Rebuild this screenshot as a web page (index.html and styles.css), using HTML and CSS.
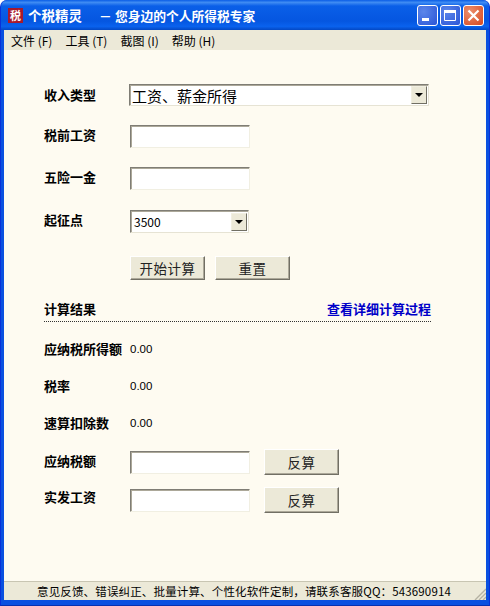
FILE: index.html
```html
<html>
<head>
    <title>个税精灵</title>
    <link rel="stylesheet" href="styles.css">
</head>

<body>
    <div class="window">
        <div class="titlebar">
            <span class="app-icon">税</span>
            <span class="title">个税精灵</span>
            <span class="subtitle"><span class="dash">－</span>您身边的个人所得税专家</span>
            <div class="win-buttons">
                <div class="win-btn">
                    <svg width="19" height="19" viewBox="0 0 19 19"><rect x="4" y="12" width="7" height="3" fill="#fff"/></svg>
                </div>
                <div class="win-btn">
                    <svg width="19" height="19" viewBox="0 0 19 19"><path d="M3.5 4.5h11v10h-11z" fill="none" stroke="#fff"/><rect x="3" y="4" width="12" height="3" fill="#fff"/></svg>
                </div>
                <div class="win-btn close">
                    <svg width="19" height="19" viewBox="0 0 19 19"><path d="M4.5 4.5l10 10M14.5 4.5l-10 10" stroke="#fff" stroke-width="2.2"/></svg>
                </div>
            </div>
        </div>

        <div class="menubar">
            <span>文件 (F)</span>
            <span>工具 (T)</span>
            <span>截图 (I)</span>
            <span>帮助 (H)</span>
        </div>

        <div class="content">
            <div class="row row-type">
                <label>收入类型</label>
                <div class="select select-wide">
                    <span class="select-text big">工资、薪金所得</span>
                    <span class="arrow"></span>
                </div>
            </div>
            <div class="row row-salary">
                <label>税前工资</label>
                <div class="input"></div>
            </div>
            <div class="row row-fund">
                <label>五险一金</label>
                <div class="input"></div>
            </div>
            <div class="row row-base">
                <label>起征点</label>
                <div class="select">
                    <span class="select-text">3500</span>
                    <span class="arrow"></span>
                </div>
            </div>
            <div class="actions">
                <button>开始计算</button>
                <button>重置</button>
            </div>

            <div class="result-head">
                <label>计算结果</label>
                <a href="#">查看详细计算过程</a>
            </div>

            <div class="result-row first">
                <label>应纳税所得额</label>
                <span>0.00</span>
            </div>
            <div class="result-row">
                <label>税率</label>
                <span>0.00</span>
            </div>
            <div class="result-row">
                <label>速算扣除数</label>
                <span>0.00</span>
            </div>
            <div class="row row-tax">
                <label>应纳税额</label>
                <div class="input"></div>
                <button>反算</button>
            </div>
            <div class="row row-net">
                <label>实发工资</label>
                <div class="input"></div>
                <button>反算</button>
            </div>
        </div>

        <div class="statusbar">
            <span>意见反馈、错误纠正、批量计算、个性化软件定制，请联系客服QQ：543690914</span>
            <svg class="grip" width="13" height="13" viewBox="0 0 13 13"><path d="M2 13L13 2M6 13l7-7M10 13l3-3" stroke="#b5b2a2" stroke-width="1.4"/></svg>
        </div>
    </div>
</body>
</html>
```

FILE: styles.css
```css
html, body {
    margin: 0;
    padding: 0;
}

body {
    width: 490px;
    height: 606px;
    overflow: hidden;
    font-family: "Noto Sans CJK SC", "Liberation Sans", sans-serif;
    font-size: 12px;
    color: #000;
}

.window {
    width: 490px;
    height: 606px;
    box-sizing: border-box;
    display: flex;
    flex-direction: column;
    padding: 0 3px 5px 3px;
    background: #0a50e0;
    border-radius: 7px 7px 0 0;
    border-left: 1px solid #0831d9;
    border-right: 1px solid #0831d9;
    border-bottom: 1px solid #0831b0;
}

.titlebar {
    height: 30px;
    margin: 0 -3px;
    padding: 0 5px 0 7px;
    flex-shrink: 0;
    display: flex;
    align-items: center;
    color: #fff;
    font-weight: bold;
    font-size: 13.5px;
    border-radius: 7px 7px 0 0;
    background: linear-gradient(#0a5de6 0, #3f8cf3 8%, #0a5fe8 20%, #0556e0 70%, #0a62ee 88%, #0348c4 100%);
}

.app-icon {
    width: 15px;
    height: 15px;
    background: #a81a2c;
    color: #fff;
    font-size: 11px;
    line-height: 15px;
    text-align: center;
    margin-right: 5px;
}

.title {
    margin-right: 17px;
}

.subtitle {
    font-size: 12.75px;
}

.dash {
    display: inline-block;
    width: 16px;
}

.win-buttons {
    margin-left: auto;
    display: flex;
    gap: 2px;
}

.win-btn {
    width: 19px;
    height: 19px;
    border: 1px solid #fff;
    border-radius: 3px;
    background: radial-gradient(circle at 30% 30%, #5c86ea, #2a55d6);
}

.win-btn svg {
    display: block;
}

.win-btn.close {
    background: radial-gradient(circle at 30% 30%, #eb8f6d, #d8481f);
}

.menubar {
    height: 20px;
    flex-shrink: 0;
    background: #ece9d8;
    display: flex;
    align-items: center;
    gap: 13px;
    padding-left: 7px;
    font-size: 12px;
}

.content {
    flex: 1;
    background: #fefbf1;
    padding: 34px 0 0 40px;
}

.row {
    display: flex;
    align-items: center;
}

label {
    width: 86px;
    font-weight: bold;
    font-size: 13px;
    flex-shrink: 0;
}

.row label {
    margin-bottom: 4px;
}

.row-type label {
    margin-bottom: 2px;
}

.row-net label {
    margin-bottom: 7px;
}

.row-type { height: 22px; }
.row-salary { margin-top: 19px; height: 23px; }
.row-fund { margin-top: 19px; height: 23px; }
.row-base { margin-top: 20px; height: 23px; }
.row-tax { margin-top: 18px; height: 26px; }
.row-net { margin-top: 12px; height: 26px; }

.input {
    width: 120px;
    height: 23px;
    box-sizing: border-box;
    background: #fff;
    border: 1px solid;
    border-color: #7f7d75 #f1efe2 #f1efe2 #7f7d75;
    box-shadow: inset 1px 1px 0 #aca899;
}

.select {
    width: 119px;
    height: 23px;
    box-sizing: border-box;
    background: #fff;
    border: 1px solid;
    border-color: #7f7d75 #e6e3d4 #e6e3d4 #7f7d75;
    box-shadow: inset 1px 1px 0 #aca899;
    display: flex;
    align-items: center;
    justify-content: space-between;
}

.select-wide {
    width: 300px;
    height: 22px;
    margin-left: -1px;
}

.select-text {
    padding-left: 3px;
    font-size: 12px;
}

.select-text.big {
    padding-left: 2px;
    font-size: 15px;
}

.arrow {
    width: 16px;
    height: 18px;
    margin-right: 1px;
    background: #ece9d8;
    border: 1px solid;
    border-color: #f1efe2 #716f64 #716f64 #f1efe2;
    box-sizing: border-box;
    position: relative;
}

.arrow::after {
    content: "";
    position: absolute;
    left: 3px;
    top: 6px;
    border: 4px solid transparent;
    border-top: 4px solid #000;
    border-bottom: 0;
}

button {
    width: 75px;
    height: 24px;
    padding: 0;
    background: #ece9d8;
    border: 1px solid;
    border-color: #fff #716f64 #716f64 #fff;
    box-shadow: inset -1px -1px 0 #aca899;
    font-family: inherit;
    font-size: 13.5px;
    letter-spacing: 0.5px;
    color: #222;
}

.row button {
    height: 26px;
    margin-left: 14px;
}

.actions {
    margin: 23px 0 0 86px;
    display: flex;
    gap: 10px;
}

.result-head {
    margin-top: 19px;
    width: 387px;
    height: 19px;
    display: flex;
    justify-content: space-between;
    align-items: center;
    border-bottom: 1px dotted #333;
    padding-bottom: 3px;
}

.result-head a {
    color: #0000c8;
    font-weight: bold;
    font-size: 13px;
    text-decoration: none;
}

.result-row {
    margin-top: 20px;
    height: 17px;
    display: flex;
    align-items: center;
    font-size: 11.5px;
    font-family: "Liberation Sans", sans-serif;
}

.result-row label {
    font-family: "Noto Sans CJK SC", sans-serif;
}

.result-row.first {
    margin-top: 18px;
}

.statusbar {
    height: 19px;
    flex-shrink: 0;
    background: #ece9d8;
    border-top: 1px solid #c8c5b2;
    box-sizing: border-box;
    display: flex;
    align-items: center;
    padding-left: 33px;
    font-size: 11.5px;
    letter-spacing: 0.15px;
    position: relative;
    white-space: nowrap;
}

.grip {
    position: absolute;
    right: 0;
    bottom: 0;
}
```
